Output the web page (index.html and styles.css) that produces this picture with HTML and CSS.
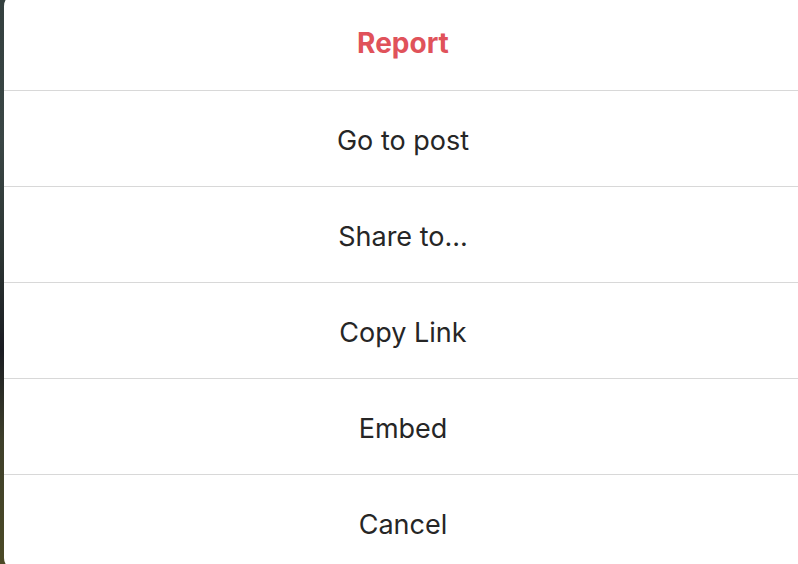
FILE: index.html
```html
<!DOCTYPE html>
<html>
<head>
<meta charset="utf-8">
<link rel="stylesheet" href="styles.css">
</head>
<body>
<div class="backdrop">
  <div class="dialog">
    <button class="item danger">Report</button>
    <button class="item">Go to post</button>
    <button class="item">Share to...</button>
    <button class="item">Copy Link</button>
    <button class="item">Embed</button>
    <button class="item">Cancel</button>
  </div>
</div>
</body>
</html>
```
FILE: styles.css
```css
html, body {
  margin: 0;
  padding: 0;
  width: 798px;
  height: 564px;
  overflow: hidden;
}
.backdrop {
  width: 798px;
  height: 564px;
  background: linear-gradient(180deg, #34403f 0%, #3a4645 25%, #2c3533 45%, #1a1c22 62%, #3e3f2a 78%, #4b4a26 100%);
  display: flex;
  align-items: flex-start;
  padding-left: 4px;
  box-sizing: border-box;
  overflow: hidden;
}
.dialog {
  margin-top: -6px;
  width: 806px;
  flex-shrink: 0;
  background: #fff;
  border-radius: 12px;
  display: flex;
  flex-direction: column;
}
.item {
  height: 96px;
  border: 0;
  border-top: 1px solid #d8d8d8;
  background: transparent;
  font-family: Inter, "Liberation Sans", sans-serif;
  font-size: 27px;
  color: #262626;
  padding: 4px 0 0 0;
  margin: 0;
  width: 798px;
  text-align: center;
  box-sizing: border-box;
}
.item:first-child {
  border-top: 0;
}
.danger {
  color: #e0525a;
  font-weight: 700;
  font-size: 28px;
  padding-top: 1px;
}
```
